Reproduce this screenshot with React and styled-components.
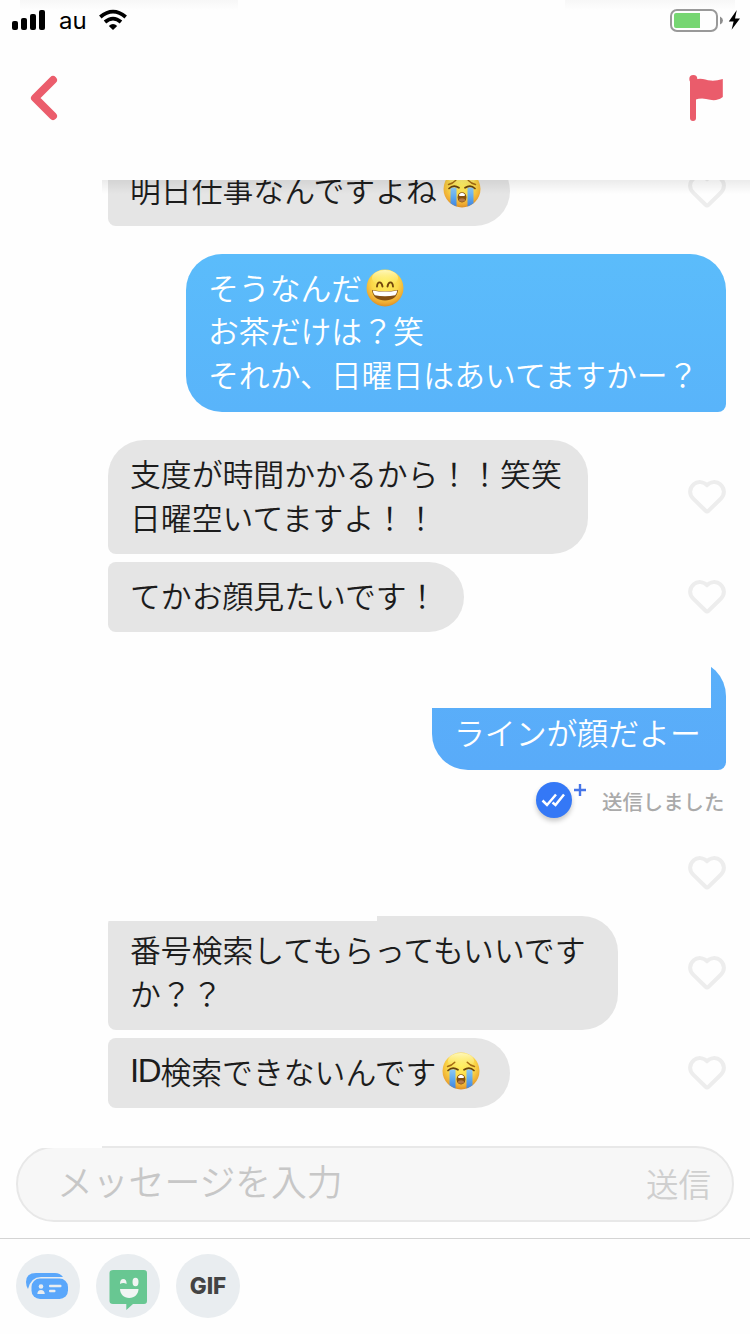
import React from "react";
import styled, {createGlobalStyle} from "styled-components";

const GlobalStyle = createGlobalStyle`
  * {
    box-sizing: border-box;
  }
  body {
    margin: 0;
    background: #fefefe;
    font-family: "Noto Sans CJK JP", "Noto Sans", sans-serif;
  }
  svg {
    display: block;
  }
`

const Screen = styled.div`
  width: 750px;
  height: 1334px;
  display: flex;
  flex-direction: column;
  overflow: hidden;
  background: #fefefe;
`

const Header = styled.header`
  position: relative;
  z-index: 2;
  flex: none;
  height: 180px;
  background: #fefefe;
  &::before {
    content: "";
    position: absolute;
    top: 0;
    left: 0;
    right: 0;
    height: 10px;
    background: linear-gradient(#f7f7f7, #fefefe);
    clip-path: polygon(20px 0, 238px 0, 238px 100%, 20px 100%, 20px 0, 565px 0, 735px 0, 735px 100%, 565px 100%, 565px 0);
  }
  &::after {
    content: "";
    position: absolute;
    top: 100%;
    left: 102px;
    right: 0;
    height: 14px;
    background: linear-gradient(rgba(0, 0, 0, 0.075), rgba(0, 0, 0, 0));
  }
`

const StatusBar = styled.div`
  position: relative;
  display: flex;
  justify-content: space-between;
  height: 40px;
  padding: 8px 9px 0 12px;
`

const StatusGroup = styled.div`
  display: flex;
  align-items: flex-start;
`

const Carrier = styled.span`
  width: 40px;
  margin-left: 13px;
  margin-top: -1px;
  font: 400 24px/28px Inter, "Liberation Sans", sans-serif;
  color: #000;
`

const NavBar = styled.nav`
  display: flex;
  justify-content: space-between;
  padding: 32px 24px 0 28px;
`

const IconButton = styled.button`
  display: block;
  padding: 0;
  border: 0;
  background: none;
`

const Messages = styled.main`
  flex: none;
  display: flex;
  flex-direction: column;
  height: 966px;
  padding: 0 24px 0 108px;
  overflow: hidden;
`

const Row = styled.div`
  flex: none;
  display: flex;
  align-items: center;
  justify-content: ${p => p.$mine ? "flex-end" : "space-between"};
  min-height: 70px;
  margin-top: ${p => p.$gap}px;
`

const Bubble = styled.div`
  position: relative;
  display: flex;
  flex-direction: column;
  justify-content: flex-end;
  width: ${p => p.$width}px;
  height: ${p => p.$height || 70}px;
  padding: 0 0 ${p => p.$fill ? 17 : 16}px 22px;
  border-radius: ${p => p.$radius};
  background: ${p => p.$fill || "#e5e5e5"};
  color: ${p => p.$fill ? "#fff" : "#1c1c1c"};
  font-size: 30.85px;
  font-weight: 350;
  line-height: 43.3px;
  white-space: nowrap;
`

const Line = styled.span`
  display: flex;
  align-items: center;
  height: 43.3px;
`

const Latin = styled.span`
  font: 400 33px/43px "Liberation Sans", sans-serif;
  letter-spacing: -1.3px;
`

const Cover = styled.span`
  position: absolute;
  top: 0;
  left: 0;
  width: ${p => p.$width}px;
  height: ${p => p.$height}px;
  background: #fefefe;
`

const Receipt = styled.div`
  flex: none;
  display: flex;
  justify-content: flex-end;
  height: 60px;
  padding-top: 12px;
`

const Badge = styled.span`
  width: 36px;
  height: 36px;
  border-radius: 50%;
  background: #3478f6;
  box-shadow: 0 3px 5px rgba(0, 0, 0, 0.22);
`

const ReceiptText = styled.span`
  width: 124px;
  margin-left: 14px;
  padding-top: 4px;
  color: #aaa;
  font-size: 20.4px;
  font-weight: 500;
  line-height: 30px;
  white-space: nowrap;
`

const Composer = styled.div`
  position: relative;
  flex: none;
  display: flex;
  justify-content: space-between;
  height: 76px;
  margin: 0 16px 16px;
  padding: 0 21px 0 39px;
  border: 2px solid #e8e8e8;
  border-radius: 38px;
  background: #f7f7f7;
  &::before {
    content: "";
    position: absolute;
    top: -2px;
    left: 15px;
    width: 69px;
    height: 2px;
    background: #fefefe;
  }
`

const Placeholder = styled.span`
  color: #c7c7c7;
  font-size: 35.8px;
  font-weight: 350;
  line-height: 64px;
`

const Send = styled.span`
  color: #cfcfcf;
  font-size: 32.5px;
  font-weight: 350;
  line-height: 69px;
`

const Toolbar = styled.footer`
  flex: 1;
  display: flex;
  gap: 16px;
  padding: 15px 16px 0;
  border-top: 1px solid #d4d4d4;
`

const Tool = styled.button`
  display: flex;
  align-items: center;
  justify-content: center;
  width: 64px;
  height: 64px;
  padding: 0;
  border: 0;
  border-radius: 50%;
  background: #e9edf0;
  color: #444;
  font: 800 22.5px/64px Inter, sans-serif;
`

const Heart = () => (
  <svg width="38" height="34" viewBox="0 0 38 34" fill="none">
    <path d="M19 5.3C15.8 1.5 9.5 1 5.8 4.2C1 8.4 1 14.5 5.2 18.7L17.6 30.8Q19 32.2 20.4 30.8L32.8 18.7C37 14.5 37 8.4 32.2 4.2C28.5 1 22.2 1.5 19 5.3Z"
      stroke="#ededed" strokeWidth="4" strokeLinejoin="round"/>
  </svg>
)

const FaceSvg = styled.svg`
  flex: none;
  margin: 2px 0 0 ${p => p.$space}px;
`

const FaceFill = ({id}) => (
  <>
    <defs>
      <radialGradient id={id} cx=".5" cy=".35" r=".66">
        <stop offset="0" stopColor="#fff05e"/>
        <stop offset=".55" stopColor="#fbd849"/>
        <stop offset=".85" stopColor="#eeaa32"/>
        <stop offset="1" stopColor="#d98b22"/>
      </radialGradient>
      <linearGradient id={id + "-top"} x2="0" y2="1">
        <stop offset="0" stopColor="#fffbc8" stopOpacity=".9"/>
        <stop offset="1" stopColor="#fff27a" stopOpacity="0"/>
      </linearGradient>
    </defs>
    <circle cx="19" cy="19" r="18.5" fill={`url(#${id})`}/>
    <ellipse cx="19" cy="9" rx="13" ry="8" fill={`url(#${id}-top)`}/>
  </>
)

const Crying = ({id}) => (
  <FaceSvg $space={6} width="38" height="38" viewBox="0 0 38 38">
    <FaceFill id={id}/>
    <defs>
      <linearGradient id={id + "-tear"} x2="0" y2="1">
        <stop offset="0" stopColor="#8cc9f5"/>
        <stop offset=".55" stopColor="#5aa6ee"/>
        <stop offset="1" stopColor="#3f83e0"/>
      </linearGradient>
    </defs>
    <path d="M7.5 17.5h6v19q-3.5-1.2-6-3.2zM24.5 17.5h6v15.8q-2.5 2-6 3.2z" fill={`url(#${id}-tear)`}/>
    <path d="M5.5 14.5Q10 13.5 12.8 10.3M32.5 14.5Q28 13.5 25.2 10.3" stroke="#a66c13" strokeWidth="1.4" fill="none" strokeLinecap="round"/>
    <path d="M6 18.5Q10.5 14 16 17.8M22 17.8Q27.5 14 32 18.5" stroke="#68420c" strokeWidth="1.7" fill="none" strokeLinecap="round"/>
    <path d="M14.6 27.5C14.6 20.5 23.4 20.5 23.4 27.5C23.4 34 14.6 34 14.6 27.5Z" fill="#85500d"/>
    <path d="M16 24.5Q19 21 22 24.5L21.6 26H16.4Z" fill="#fff"/>
    <ellipse cx="19" cy="30" rx="3" ry="1.7" fill="#b77946"/>
  </FaceSvg>
)

const Grinning = ({id}) => (
  <FaceSvg $space={4} width="38" height="38" viewBox="0 0 38 38">
    <FaceFill id={id}/>
    <path d="M11 17.5C11.5 12 15.5 12 16.5 17.5M21.5 17.5C22.5 12 26.5 12 27 17.5" stroke="#71450c" strokeWidth="1.9" fill="none" strokeLinecap="round"/>
    <path d="M6 21Q19 23.5 32 21C31.5 28 26 31.5 19 31.5S6.5 28 6 21Z" fill="#844f12"/>
    <path d="M6.8 21.4Q19 23.8 31.2 21.4Q31 24.8 29.2 26.3Q19 28.3 8.8 26.3Q7 24.8 6.8 21.4Z" fill="#fff"/>
  </FaceSvg>
)

const Signal = () => (
  <svg width="34" height="22" viewBox="0 0 34 22">
    <rect x="0" y="13" width="6" height="9" rx="2"/>
    <rect x="9" y="10" width="6" height="12" rx="2"/>
    <rect x="18" y="6" width="6" height="16" rx="2"/>
    <rect x="27" y="2" width="6" height="20" rx="2"/>
  </svg>
)

const Wifi = () => (
  <svg width="28" height="22" viewBox="0 0 28 22" fill="none" stroke="#000" strokeWidth="3.8">
    <path d="M1.3 9Q14-1.7 26.7 9"/>
    <path d="M6 14Q14 7.2 22 14"/>
    <path d="M14 22L9.8 18Q14 14.2 18.2 18Z" fill="#000" stroke="none"/>
  </svg>
)

const Battery = () => (
  <svg width="71" height="26" viewBox="0 0 71 26">
    <rect x="1" y="2" width="46" height="21" rx="6" fill="none" stroke="#999" strokeWidth="2"/>
    <path d="M6 5H30V20H6Q4 20 4 18V7Q4 5 6 5Z" fill="#76d672"/>
    <path d="M50 8.5Q53 10 53 12.5T50 16.5Z" fill="#8e8e8e"/>
    <path d="M66.8 2L58.8 13.6H63.6L61.6 21.8L70 10.4H65Z" fill="#000"/>
  </svg>
)

const received = "36px 36px 36px 8px"
const follow = "8px 36px 36px 8px"
const sent = "36px 36px 8px 36px"

export default function App() {
  return (
    <Screen>
      <GlobalStyle/>
      <Header>
        <StatusBar>
          <StatusGroup>
            <Signal/>
            <Carrier>au</Carrier>
            <Wifi/>
          </StatusGroup>
          <StatusGroup>
            <Battery/>
          </StatusGroup>
        </StatusBar>
        <NavBar>
          <IconButton aria-label="back">
            <svg width="32" height="52" viewBox="0 0 32 52">
              <path d="M25 8L7 26L25 44" fill="none" stroke="#eb5d6c" strokeWidth="8" strokeLinecap="round" strokeLinejoin="round"/>
            </svg>
          </IconButton>
          <IconButton aria-label="report">
            <svg width="40" height="52" viewBox="0 0 40 52" fill="#ea5c6b">
              <circle cx="7.3" cy="7" r="4"/>
              <path d="M4 7H10V46Q10 49 7 49T4 46Z"/>
              <path d="M9 7.5C16 5.3 19 8 25 8.6Q30 9 36.8 7V25Q35 27 30 28Q26 28.6 20 27Q15 25.8 9 27.8Z"/>
            </svg>
          </IconButton>
        </NavBar>
      </Header>
      <Messages>
        <Row $gap={-24}>
          <Bubble $width={402} $radius={follow}>
            <Line>明日仕事なんですよね<Crying id="cry-a"/></Line>
          </Bubble>
          <Heart/>
        </Row>
        <Row $mine $gap={28}>
          <Bubble $width={540} $height={158} $radius={sent} $fill="linear-gradient(#5bbcfb, #59b4fa)">
            <Line>そうなんだ<Grinning id="grin"/></Line>
            <Line>お茶だけは？笑</Line>
            <Line>それか、日曜日はあいてますかー？</Line>
          </Bubble>
        </Row>
        <Row $gap={28}>
          <Bubble $width={480} $height={114} $radius={received}>
            <Line>支度が時間かかるから！！笑笑</Line>
            <Line>日曜空いてますよ！！</Line>
          </Bubble>
          <Heart/>
        </Row>
        <Row $gap={8}>
          <Bubble $width={356} $radius={follow}>
            <Line>てかお顔見たいです！</Line>
          </Bubble>
          <Heart/>
        </Row>
        <Row $mine $gap={28}>
          <Bubble $width={294} $height={110} $radius={sent} $fill="linear-gradient(#5ab0fa, #59abf9)">
            <Cover $width={279} $height={48}/>
            <Line>ラインが顔だよー</Line>
          </Bubble>
        </Row>
        <Receipt>
          <Badge>
            <svg width="36" height="36" viewBox="0 0 36 36" fill="none" stroke="#fff" strokeWidth="2.5">
              <path d="M6.5 18.5L11 23L20 12.5M16.5 20.5L19.5 23L28 12.5"/>
            </svg>
          </Badge>
          <svg width="16" height="16" viewBox="0 0 16 16">
            <path d="M8 2V14M2 8H14" stroke="#4675e8" strokeWidth="2.4"/>
          </svg>
          <ReceiptText>送信しました</ReceiptText>
        </Receipt>
        <Row $gap={8}>
          <span/>
          <Heart/>
        </Row>
        <Row $gap={8}>
          <Bubble $width={510} $height={114} $radius={follow}>
            <Cover $width={269} $height={5}/>
            <Line>番号検索してもらってもいいです</Line>
            <Line>か？？</Line>
          </Bubble>
          <Heart/>
        </Row>
        <Row $gap={8}>
          <Bubble $width={402} $radius={follow}>
            <Line><Latin>ID</Latin>検索できないんです<Crying id="cry-b"/></Line>
          </Bubble>
          <Heart/>
        </Row>
      </Messages>
      <Composer>
        <Placeholder>メッセージを入力</Placeholder>
        <Send>送信</Send>
      </Composer>
      <Toolbar>
        <Tool aria-label="contact card">
          <svg width="46" height="30" viewBox="0 0 46 30">
            <path d="M3 18Q1 15 1 11Q1 2 11 2H30Q35 2 38 6H16Q6 6 3 18Z" fill="#5aa7fb"/>
            <rect x="6.5" y="7.5" width="36.5" height="20.5" rx="8.5" fill="#5aa7fb"/>
            <g fill="#e9edf0">
              <circle cx="16" cy="15.5" r="2.3"/>
              <path d="M12.3 23Q12.6 19 16 19T19.8 23Z"/>
              <rect x="24" y="13.8" width="12.5" height="2.5" rx="1"/>
              <rect x="24" y="18.8" width="6.5" height="2.5" rx="1"/>
            </g>
          </svg>
        </Tool>
        <Tool aria-label="sticker">
          <svg width="38" height="48" viewBox="0 -6 38 48">
            <path d="M4 2H35Q38 2 38 5V33Q38 36 35 36H24L17.3 42V36H4Q.5 36 .5 33V5Q.5 2 4 2Z" fill="#68c792"/>
            <g fill="#f1f5f3">
              <path d="M11 21H29.5C29.5 26 25.5 30 20.2 30S11 26 11 21Z"/>
              <ellipse cx="26.5" cy="14" rx="3" ry="4.2"/>
              <path d="M11 16Q11 11 14.3 11T17.6 16Q14.3 14 11 16Z"/>
            </g>
          </svg>
        </Tool>
        <Tool>GIF</Tool>
      </Toolbar>
    </Screen>
  )
}
